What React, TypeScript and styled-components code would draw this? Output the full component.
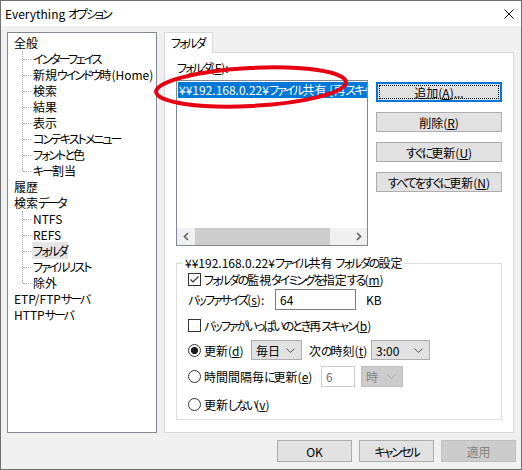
import type { ReactNode } from 'react';
import styled, { createGlobalStyle } from 'styled-components';

const GlobalStyle = createGlobalStyle`
  html, body {
    margin: 0;
    padding: 0;
    background: #ffffff;
  }
  body {
    font-family: "Noto Sans CJK JP", "Noto Sans", sans-serif;
    font-size: 12px;
    font-feature-settings: "palt";
    color: #000000;
  }
  * {
    box-sizing: border-box;
  }
`;

// Yu Gothic UI draws kana much narrower than Noto, so kana runs get squeezed
const Kana = styled.span`
  letter-spacing: -2px;
`;

function jp(text: string): ReactNode {
  return text.split(/([\u3040-\u30ff]+)/).map((part, i) =>
    /[\u3040-\u30ff]/.test(part) ? <Kana key={i}>{part}</Kana> : part,
  );
}

const Window = styled.div`
  position: relative;
  width: 522px;
  height: 470px;
  border: 1px solid #707070;
  background: #f0f0f0;
  display: flex;
  flex-direction: column;
  overflow: hidden;
`;

const TitleBar = styled.div`
  flex: none;
  height: 25px;
  background: #ffffff;
  display: flex;
  align-items: center;
  justify-content: space-between;
  padding: 0 7px 0 4px;
  line-height: 16px;
`;

const Body = styled.div`
  flex: none;
  height: 407px;
  display: flex;
  gap: 7px;
  padding: 6px 0 0 6px;
`;

const Tree = styled.div`
  width: 150px;
  border: 1px solid #828790;
  background: #ffffff;
  padding: 2px 0 0 6px;
  line-height: 16px;
`;

const TreeGroup = styled.div`
  position: relative;

  &::before {
    content: '';
    position: absolute;
    left: 8px;
    top: 0;
    bottom: 8px;
    border-left: 1px dotted #a0a0a0;
  }
`;

const TreeItem = styled.div<{ $child?: boolean }>`
  position: relative;
  height: 16px;
  padding-left: ${(p) => (p.$child ? 18 : 0)}px;
  white-space: nowrap;

  ${(p) =>
    p.$child &&
    `
    &::before {
      content: '';
      position: absolute;
      left: 9px;
      top: 8px;
      width: 8px;
      border-top: 1px dotted #a0a0a0;
    }
  `}
`;

const TreeLabel = styled.span<{ $selected?: boolean }>`
  padding: 0 1px;
  background: ${(p) => (p.$selected ? '#e5e5e5' : 'transparent')};
`;

const TabArea = styled.div`
  width: 350px;
  display: flex;
  flex-direction: column;
`;

const TabStrip = styled.div`
  display: flex;
  height: 20px;
`;

const Tab = styled.div`
  position: relative;
  z-index: 1;
  width: 49px;
  height: 21px;
  padding-left: 6px;
  border: 1px solid #d9d9d9;
  border-bottom: none;
  background: #ffffff;
  line-height: 19px;
  white-space: nowrap;
`;

const Panel = styled.div`
  flex: 1;
  background: #ffffff;
  border: 1px solid #d9d9d9;
  padding: 7px 0 0 11px;
`;

const TopRow = styled.div`
  display: flex;
  gap: 8px;
`;

const ListColumn = styled.div`
  width: 192px;
  display: flex;
  flex-direction: column;
`;

const FieldLabel = styled.div`
  line-height: 16px;
  padding-left: 1px;
  margin-bottom: 4px;
  white-space: nowrap;
`;

const ListBox = styled.div`
  height: 166px;
  border: 1px solid #828790;
  background: #ffffff;
  display: flex;
  flex-direction: column;
  padding-top: 1px;
`;

const ListItem = styled.div`
  height: 16px;
  margin-left: 1px;
  padding-left: 1px;
  line-height: 16px;
  background: #0078d7;
  color: #ffffff;
  white-space: nowrap;
  overflow: hidden;
`;

const ListSpacer = styled.div`
  flex: 1;
`;

const HScroll = styled.div`
  height: 17px;
  display: flex;
  background: #f0f0f0;
`;

const ScrollArrow = styled.div`
  width: 17px;
  display: flex;
  align-items: center;
  justify-content: center;
`;

const ScrollTrack = styled.div`
  flex: 1;
  display: flex;
`;

const ScrollThumb = styled.div`
  width: 135px;
  margin-left: 1px;
  background: #cdcdcd;
`;

const ButtonColumn = styled.div`
  width: 126px;
  display: flex;
  flex-direction: column;
  gap: 10px;
  padding-top: 22px;
`;

const PushButton = styled.div<{ $primary?: boolean; $disabled?: boolean }>`
  display: flex;
  align-items: center;
  justify-content: center;
  white-space: nowrap;
  background: ${(p) => (p.$disabled ? '#cccccc' : '#e1e1e1')};
  color: ${(p) => (p.$disabled ? '#838383' : '#000000')};
  border: 1px solid
    ${(p) => (p.$primary ? '#0078d7' : p.$disabled ? '#bfbfbf' : '#adadad')};
  box-shadow: ${(p) => (p.$primary ? 'inset 0 0 0 1px #0078d7' : 'none')};
  outline: ${(p) => (p.$primary ? '1px dotted #000000' : 'none')};
  outline-offset: -4px;
`;

const SideButton = styled(PushButton)`
  height: 20px;
`;

const FooterButton = styled(PushButton)`
  width: 75px;
  height: 22px;
`;

const Key = styled.span`
  text-decoration: underline;
`;

const GroupBox = styled.fieldset`
  width: 326px;
  margin: 9px 0 0 0;
  min-width: 0;
  border: 1px solid #dcdcdc;
  padding: 0 0 7px 11px;
`;

const GroupTitle = styled.legend`
  margin-left: -5px;
  padding: 0 2px;
  line-height: 16px;
  white-space: nowrap;
`;

const Row = styled.div<{ $h: number; $mt?: number }>`
  display: flex;
  align-items: center;
  height: ${(p) => p.$h}px;
  margin-top: ${(p) => p.$mt ?? 0}px;
  white-space: nowrap;
`;

const Option = styled.div<{ $w?: number }>`
  display: flex;
  align-items: center;
  flex: none;
  width: ${(p) => (p.$w ? `${p.$w}px` : 'auto')};
`;

const CheckBox = styled.span`
  flex: none;
  width: 13px;
  height: 13px;
  margin-right: 3px;
  border: 1px solid #333333;
  background: #ffffff;
  display: flex;
  align-items: center;
  justify-content: center;
`;

const Radio = styled.span<{ $checked?: boolean }>`
  flex: none;
  width: 13px;
  height: 13px;
  margin-right: 3px;
  border: 1px solid #333333;
  border-radius: 50%;
  background: ${(p) =>
    p.$checked ? 'radial-gradient(circle, #1a1a1a 0 3.3px, #ffffff 3.9px)' : '#ffffff'};
`;

const FieldName = styled.span<{ $w?: number; $ml?: number }>`
  flex: none;
  width: ${(p) => (p.$w ? `${p.$w}px` : 'auto')};
  margin-left: ${(p) => p.$ml ?? 0}px;
`;

const TextBox = styled.div<{ $w: number; $disabled?: boolean }>`
  flex: none;
  width: ${(p) => p.$w}px;
  height: 21px;
  line-height: 19px;
  padding-left: 4px;
  background: #ffffff;
  border: 1px solid ${(p) => (p.$disabled ? '#cccccc' : '#7a7a7a')};
  color: ${(p) => (p.$disabled ? '#6d6d6d' : '#000000')};
`;

const ComboBox = styled.div<{ $w: number; $ml?: number; $disabled?: boolean }>`
  flex: none;
  width: ${(p) => p.$w}px;
  height: ${(p) => (p.$disabled ? 21 : 20)}px;
  margin-left: ${(p) => p.$ml ?? 0}px;
  display: flex;
  align-items: center;
  justify-content: space-between;
  padding: 0 6px 0 4px;
  background: ${(p) => (p.$disabled ? '#cccccc' : '#e1e1e1')};
  border: 1px solid ${(p) => (p.$disabled ? '#bfbfbf' : '#adadad')};
  color: ${(p) => (p.$disabled ? '#838383' : '#000000')};
`;

const Footer = styled.div`
  flex: 1;
  display: flex;
  justify-content: flex-end;
  gap: 7px;
  padding: 7px 5px 0 0;
`;

const Annotation = styled.svg`
  position: absolute;
  left: 149px;
  top: 59px;
  pointer-events: none;
`;

function Chevron({ color }: { color: string }) {
  return (
    <svg width="9" height="5" viewBox="0 0 9 5">
      <polyline points="0.5,0.5 4.5,4.5 8.5,0.5" fill="none" stroke={color} strokeWidth="1" />
    </svg>
  );
}

function ArrowGlyph({ dir }: { dir: 'left' | 'right' }) {
  const pts = dir === 'left' ? '5,1 1.5,4.5 5,8' : '1,1 4.5,4.5 1,8';
  return (
    <svg width="6" height="9" viewBox="0 0 6 9">
      <polyline points={pts} fill="none" stroke="#606060" strokeWidth="1.6" />
    </svg>
  );
}

function CheckMark() {
  return (
    <svg width="11" height="11" viewBox="0 0 11 11">
      <polyline points="1.5,5.5 4,8 9.5,2.5" fill="none" stroke="#333333" strokeWidth="1.2" />
    </svg>
  );
}

export default function App() {
  const general = ['インターフェイス', '新規ウインドウ時(Home)', '検索', '結果', '表示', 'コンテキストメニュー', 'フォントと色', 'キー割当'];
  const indexes = ['NTFS', 'REFS', 'フォルダ', 'ファイルリスト', '除外'];

  return (
    <>
      <GlobalStyle />
      <Window>
        <TitleBar>
          <span>Everything {jp('オプション')}</span>
          <svg width="10" height="10" viewBox="0 0 10 10">
            <path d="M0.5 0.5 L9.5 9.5 M9.5 0.5 L0.5 9.5" stroke="#000000" strokeWidth="1" />
          </svg>
        </TitleBar>

        <Body>
          <Tree>
            <TreeItem>全般</TreeItem>
            <TreeGroup>
              {general.map((t) => (
                <TreeItem key={t} $child>
                  <TreeLabel>{jp(t)}</TreeLabel>
                </TreeItem>
              ))}
            </TreeGroup>
            <TreeItem>履歴</TreeItem>
            <TreeItem>{jp('検索データ')}</TreeItem>
            <TreeGroup>
              {indexes.map((t) => (
                <TreeItem key={t} $child>
                  <TreeLabel $selected={t === 'フォルダ'}>{jp(t)}</TreeLabel>
                </TreeItem>
              ))}
            </TreeGroup>
            <TreeItem>{jp('ETP/FTPサーバ')}</TreeItem>
            <TreeItem>{jp('HTTPサーバ')}</TreeItem>
          </Tree>

          <TabArea>
            <TabStrip>
              <Tab>{jp('フォルダ')}</Tab>
            </TabStrip>
            <Panel>
              <TopRow>
                <ListColumn>
                  <FieldLabel>
                    {jp('フォルダ')}(<Key>F</Key>):
                  </FieldLabel>
                  <ListBox>
                    <ListItem>{jp('¥¥192.168.0.22¥ファイル共有 [再スキャン待ち]')}</ListItem>
                    <ListSpacer />
                    <HScroll>
                      <ScrollArrow>
                        <ArrowGlyph dir="left" />
                      </ScrollArrow>
                      <ScrollTrack>
                        <ScrollThumb />
                      </ScrollTrack>
                      <ScrollArrow>
                        <ArrowGlyph dir="right" />
                      </ScrollArrow>
                    </HScroll>
                  </ListBox>
                </ListColumn>
                <ButtonColumn>
                  <SideButton $primary>
                    追加(<Key>A</Key>)...
                  </SideButton>
                  <SideButton>
                    削除(<Key>R</Key>)
                  </SideButton>
                  <SideButton>
                    {jp('すぐに更新')}(<Key>U</Key>)
                  </SideButton>
                  <SideButton>
                    {jp('すべてをすぐに更新')}(<Key>N</Key>)
                  </SideButton>
                </ButtonColumn>
              </TopRow>

              <GroupBox>
                <GroupTitle>{jp('¥¥192.168.0.22¥ファイル共有 フォルダの設定')}</GroupTitle>
                <Row $h={16}>
                  <CheckBox>
                    <CheckMark />
                  </CheckBox>
                  {jp('フォルダの監視タイミングを指定する')}(<Key>m</Key>)
                </Row>
                <Row $h={21} $mt={2}>
                  <FieldName $w={87}>
                    {jp('バッファサイズ')}(<Key>s</Key>):
                  </FieldName>
                  <TextBox $w={81}>64</TextBox>
                  <FieldName $ml={10}>KB</FieldName>
                </Row>
                <Row $h={16} $mt={7}>
                  <CheckBox />
                  {jp('バッファがいっぱいのとき再スキャン')}(<Key>b</Key>)
                </Row>
                <Row $h={20} $mt={7}>
                  <Option $w={63}>
                    <Radio $checked />
                    更新(<Key>d</Key>)
                  </Option>
                  <ComboBox $w={51}>
                    毎日
                    <Chevron color="#555555" />
                  </ComboBox>
                  <FieldName $w={62} $ml={7}>
                    {jp('次の時刻')}(<Key>t</Key>)
                  </FieldName>
                  <ComboBox $w={59}>
                    3:00
                    <Chevron color="#555555" />
                  </ComboBox>
                </Row>
                <Row $h={21} $mt={6}>
                  <Option $w={133}>
                    <Radio />
                    {jp('時間間隔毎に更新')}(<Key>e</Key>)
                  </Option>
                  <TextBox $w={34} $disabled>
                    6
                  </TextBox>
                  <ComboBox $w={42} $ml={6} $disabled>
                    時
                    <Chevron color="#a6a6a6" />
                  </ComboBox>
                </Row>
                <Row $h={16} $mt={9}>
                  <Option>
                    <Radio />
                    {jp('更新しない')}(<Key>v</Key>)
                  </Option>
                </Row>
              </GroupBox>
            </Panel>
          </TabArea>
        </Body>

        <Footer>
          <FooterButton>OK</FooterButton>
          <FooterButton>{jp('キャンセル')}</FooterButton>
          <FooterButton $disabled>適用</FooterButton>
        </Footer>

        <Annotation width="204" height="56" viewBox="0 0 204 56">
          <ellipse
            cx="101"
            cy="27"
            rx="95"
            ry="19"
            transform="rotate(-3 101 27)"
            fill="none"
            stroke="#e60012"
            strokeWidth="4"
          />
        </Annotation>
      </Window>
    </>
  );
}
